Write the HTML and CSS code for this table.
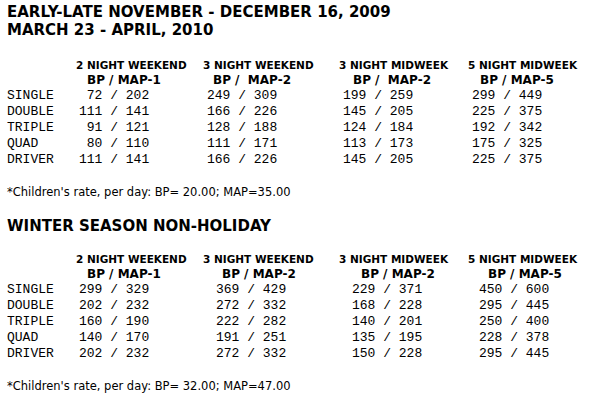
FILE: index.html
```html
<!DOCTYPE html>
<html lang="en">
<head>
    <meta charset="UTF-8">
    <title>Rates</title>
    <link rel="stylesheet" href="styles.css">
</head>
<body>
    <div class="page">
        <h1 class="season">EARLY-LATE NOVEMBER - DECEMBER 16, 2009<br>MARCH 23 - APRIL, 2010</h1>
        <div class="rates first">
            <div></div>
            <div class="head">2 NIGHT WEEKEND</div>
            <div class="head">3 NIGHT WEEKEND</div>
            <div class="head">3 NIGHT MIDWEEK</div>
            <div class="head">5 NIGHT MIDWEEK</div>

            <div></div>
            <div class="sub c2">BP / MAP-1</div>
            <div class="sub c3">BP /  MAP-2</div>
            <div class="sub c4">BP /  MAP-2</div>
            <div class="sub c5">BP / MAP-5</div>

            <div class="room">SINGLE</div><div class="val c2"> 72 / 202</div><div class="val c3">249 / 309</div><div class="val c4">199 / 259</div><div class="val c5">299 / 449</div>
            <div class="room">DOUBLE</div><div class="val c2">111 / 141</div><div class="val c3">166 / 226</div><div class="val c4">145 / 205</div><div class="val c5">225 / 375</div>
            <div class="room">TRIPLE</div><div class="val c2"> 91 / 121</div><div class="val c3">128 / 188</div><div class="val c4">124 / 184</div><div class="val c5">192 / 342</div>
            <div class="room">QUAD</div><div class="val c2"> 80 / 110</div><div class="val c3">111 / 171</div><div class="val c4">113 / 173</div><div class="val c5">175 / 325</div>
            <div class="room">DRIVER</div><div class="val c2">111 / 141</div><div class="val c3">166 / 226</div><div class="val c4">145 / 205</div><div class="val c5">225 / 375</div>
        </div>
        <p class="note">*Children's rate, per day: BP= 20.00; MAP=35.00</p>

        <h1 class="season">WINTER SEASON NON-HOLIDAY</h1>
        <div class="rates second">
            <div></div>
            <div class="head">2 NIGHT WEEKEND</div>
            <div class="head">3 NIGHT WEEKEND</div>
            <div class="head">3 NIGHT MIDWEEK</div>
            <div class="head">5 NIGHT MIDWEEK</div>

            <div></div>
            <div class="sub c2">BP / MAP-1</div>
            <div class="sub c3">BP / MAP-2</div>
            <div class="sub c4">BP / MAP-2</div>
            <div class="sub c5">BP / MAP-5</div>

            <div class="room">SINGLE</div><div class="val c2">299 / 329</div><div class="val c3">369 / 429</div><div class="val c4">229 / 371</div><div class="val c5">450 / 600</div>
            <div class="room">DOUBLE</div><div class="val c2">202 / 232</div><div class="val c3">272 / 332</div><div class="val c4">168 / 228</div><div class="val c5">295 / 445</div>
            <div class="room">TRIPLE</div><div class="val c2">160 / 190</div><div class="val c3">222 / 282</div><div class="val c4">140 / 201</div><div class="val c5">250 / 400</div>
            <div class="room">QUAD</div><div class="val c2">140 / 170</div><div class="val c3">191 / 251</div><div class="val c4">135 / 195</div><div class="val c5">228 / 378</div>
            <div class="room">DRIVER</div><div class="val c2">202 / 232</div><div class="val c3">272 / 332</div><div class="val c4">150 / 228</div><div class="val c5">295 / 445</div>
        </div>
        <p class="note">*Children's rate, per day: BP= 32.00; MAP=47.00</p>
    </div>
</body>
</html>
```

FILE: styles.css
```css
body {
    margin: 0;
    background-color: #ffffff;
    color: #000;
    font-family: 'DejaVu Sans', sans-serif;
}
.page {
    padding: 3px 7px 0 7px;
}
.season {
    margin: 0;
    font-size: 15px;
    line-height: 18px;
    font-weight: bold;
}
.rates {
    display: grid;
    grid-template-columns: 69px 127px 136px 129px auto;
    margin-top: 19px;
}
.rates.second {
    margin-top: 17px;
}
.head, .sub {
    font-size: 10.5px;
    font-weight: bold;
    line-height: 15px;
    white-space: pre;
}
.sub {
    font-size: 12px;
}
.room, .val {
    font-family: 'Liberation Mono', 'Courier New', monospace;
    font-size: 13px;
    line-height: 16px;
    white-space: pre;
}
.first .sub.c2 { padding-left: 11px; }
.first .sub.c3 { padding-left: 10px; }
.first .sub.c4 { padding-left: 14px; }
.first .sub.c5 { padding-left: 12px; }
.first .val.c2 { padding-left: 3px; }
.first .val.c3 { padding-left: 4px; }
.first .val.c4 { padding-left: 4px; }
.first .val.c5 { padding-left: 4px; }
.second .sub.c2 { padding-left: 11px; }
.second .sub.c3 { padding-left: 19px; }
.second .sub.c4 { padding-left: 22px; }
.second .sub.c5 { padding-left: 20px; }
.second .val.c2 { padding-left: 3px; }
.second .val.c3 { padding-left: 13px; }
.second .val.c4 { padding-left: 13px; }
.second .val.c5 { padding-left: 11px; }
.note {
    margin: 16px 0 17px 0;
    font-size: 11.5px;
    line-height: 16px;
}
```
